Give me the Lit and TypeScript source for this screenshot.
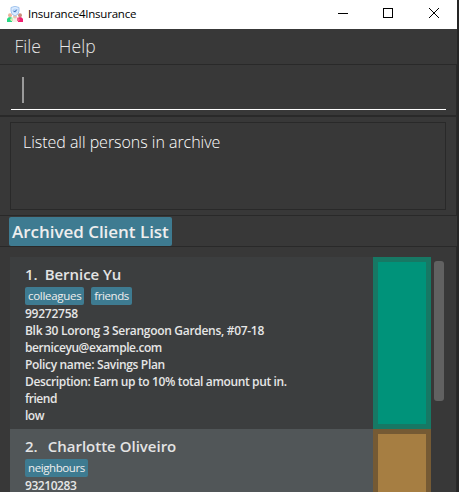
import { LitElement, html, css, svg } from "lit";
import { customElement, property } from "lit/decorators.js";
import { styleMap } from "lit/directives/style-map.js";

interface Line {
  text: string;
  gap: number;
}

interface Client {
  index: number;
  name: string;
  nameGap: number;
  tags: Line[];
  lines: Line[];
  tone: string;
  selected: boolean;
}

const clients: Client[] = [
  {
    index: 1,
    name: "Bernice Yu",
    nameGap: -0.05,
    tags: [
      { text: "colleagues", gap: -0.3 },
      { text: "friends", gap: -0.42 },
    ],
    lines: [
      { text: "99272758", gap: -0.25 },
      { text: "Blk 30 Lorong 3 Serangoon Gardens, #07-18", gap: -0.3 },
      { text: "berniceyu@example.com", gap: -0.43 },
      { text: "Policy name: Savings Plan", gap: -0.33 },
      { text: "Description: Earn up to 10% total amount put in.", gap: -0.37 },
      { text: "friend", gap: -0.5 },
      { text: "low", gap: -0.5 },
    ],
    tone: "green",
    selected: false,
  },
  {
    index: 2,
    name: "Charlotte Oliveiro",
    nameGap: 0,
    tags: [{ text: "neighbours", gap: -0.4 }],
    lines: [{ text: "93210283", gap: -0.45 }],
    tone: "amber",
    selected: true,
  },
];

@customElement("client-card")
export class ClientCard extends LitElement {
  @property({ attribute: false }) client!: Client;

  static styles = css`
    :host {
      display: block;
      flex: none;
    }
    .card {
      display: flex;
      height: 172px;
      background: #3c3e3f;
    }
    .card.selected {
      background: #515658;
    }
    .info {
      flex: 1;
      padding: 8px 0 0 15px;
      box-sizing: border-box;
      color: #eee;
      white-space: nowrap;
      overflow: hidden;
    }
    .name {
      display: flex;
      gap: 7px;
      height: 22px;
      line-height: 18px;
      font-size: 15px;
      font-weight: 600;
      color: #e4e4e4;
    }
    .selected .name {
      gap: 10px;
    }
    .tags {
      display: flex;
      gap: 7px;
      height: 18px;
    }
    .tag {
      background: #3e7b91;
      border-radius: 2px;
      padding: 0 3px;
      font-size: 11.5px;
      line-height: 18px;
    }
    .line {
      height: 17px;
      line-height: 17px;
      font-size: 12px;
      font-weight: 600;
      color: #e6e6e6;
    }
    .swatch {
      width: 58px;
      box-sizing: border-box;
      border: 5px solid #177864;
      background: #00937a;
    }
    .swatch.amber {
      border-color: #755a34;
      background: #a67e42;
    }
  `;

  render() {
    const c = this.client;
    const gap = (v: number) => styleMap({ letterSpacing: `${v}px` });
    return html`
      <div class="card ${c.selected ? "selected" : ""}">
        <div class="info">
          <div class="name"><span>${c.index}.</span><span style=${gap(c.nameGap)}>${c.name}</span></div>
          <div class="tags">
            ${c.tags.map((t) => html`<span class="tag" style=${gap(t.gap)}>${t.text}</span>`)}
          </div>
          ${c.lines.map((l) => html`<div class="line"><span style=${gap(l.gap)}>${l.text}</span></div>`)}
        </div>
        <div class="swatch ${c.tone}"></div>
      </div>
    `;
  }
}

const logo = svg`
  <path d="M0 16V13Q1 11 3 11L6 12V16Z" fill="#27d884"/>
  <path d="M16 16V13Q15 11 13 11L10 12V16Z" fill="#ef1f70"/>
  <path d="M5 16V12L8 10L11 12V16Z" fill="#f6ede8"/>
  <path d="M3 13L6 11.500V15H4Z" fill="#d5edb5"/>
  <path d="M13 13L10 11.500V15H12Z" fill="#f2648d"/>
  <circle cx="3" cy="9.200" r="2" fill="#e9b59e"/>
  <circle cx="13" cy="9.200" r="2" fill="#c98e7c"/>
  <circle cx="8" cy="10.500" r="2" fill="#edc3ae"/>
  <path d="M8 .3L12 1.500V5Q12 8.500 8 10Q4 8.500 4 5V1.500Z" fill="#dcecff" stroke="#8fb8e8" stroke-width=".8"/>
  <circle cx="8" cy="4.800" r="2.400" fill="#bdd9fa"/>
  <path d="M6.500 4.800L7.700 6L9.800 3.600" fill="none" stroke="#2a5fae" stroke-width="1"/>
`;

@customElement("app-root")
export class AppRoot extends LitElement {
  static styles = css`
    :host {
      display: block;
      width: 459px;
      height: 492px;
      overflow: hidden;
      background: #262626;
      font-family: "Open Sans", "Noto Sans", sans-serif;
    }
    .window {
      display: flex;
      flex-direction: column;
      width: 457px;
      height: 492px;
      background: #383838;
      white-space: nowrap;
    }
    .titlebar {
      display: flex;
      align-items: center;
      flex: none;
      height: 29px;
      background: #fff;
      color: #000;
    }
    .logo {
      width: 16px;
      height: 16px;
      margin: -2px 5px 0 7px;
    }
    .title {
      font-size: 11.5px;
      line-height: 27px;
      height: 29px;
      letter-spacing: -0.22px;
      flex: 1;
    }
    .controls {
      width: 101px;
      height: 10px;
      margin: -3px 18px 0 0;
    }
    .menu {
      display: flex;
      flex: none;
      gap: 18px;
      height: 35px;
      padding-left: 14.5px;
      font-size: 17.5px;
      font-weight: 300;
      line-height: 34px;
      color: #e6e6e6;
    }
    .menu .help {
      letter-spacing: 0.1px;
    }
    .pane {
      flex: none;
      box-sizing: border-box;
      border-top: 1px solid #292929;
      border-right: 1px solid #292929;
    }
    .command {
      height: 51px;
      padding: 12px 10px 0 11px;
    }
    .field {
      height: 33px;
      box-sizing: border-box;
      border-bottom: 1px solid #fff;
      padding-left: 11px;
    }
    .caret {
      width: 2px;
      height: 26px;
      background: #9a9a9a;
    }
    .result {
      height: 100px;
      border-top-width: 2px;
      padding: 5px 10px 0;
    }
    .message {
      box-sizing: border-box;
      height: 88px;
      border: 1px solid #292929;
      padding: 8px 0 0 12px;
      font-size: 16px;
      font-weight: 300;
      line-height: 23px;
      letter-spacing: -0.03px;
      color: #fff;
    }
    .heading {
      height: 31px;
      padding: 1px 0 0 9px;
      border-right: 0;
    }
    .label {
      display: inline-block;
      width: 163px;
      height: 29px;
      box-sizing: border-box;
      padding-left: 3px;
      border-radius: 2px;
      background: #3e7b91;
      color: #eee;
      font-size: 17px;
      font-weight: 600;
      line-height: 29px;
      letter-spacing: -0.03px;
    }
    .list {
      display: flex;
      flex: 1;
      min-height: 0;
      padding: 10px 0 0 10px;
      overflow: hidden;
    }
    .cards {
      display: flex;
      flex-direction: column;
      width: 421px;
    }
    .thumb {
      width: 10px;
      height: 140px;
      margin: 4px 0 0 3px;
      border-radius: 3px;
      background: #616161;
    }
  `;

  render() {
    return html`
      <div class="window">
        <div class="titlebar">
          <svg class="logo" viewBox="0 0 16 16">${logo}</svg>
          <span class="title">Insurance4Insurance</span>
          <svg class="controls" viewBox="0 0 101 10" fill="none" stroke="#000">
            <path d="M0 5.500H10M45.500 .500H54.500V9.500H45.500Z" shape-rendering="crispEdges" />
            <path d="M91 0L101 10M101 0L91 10" />
          </svg>
        </div>
        <div class="menu"><span class="file">File</span><span class="help">Help</span></div>
        <div class="pane command"><div class="field"><div class="caret"></div></div></div>
        <div class="pane result"><div class="message">Listed all persons in archive</div></div>
        <div class="pane heading"><span class="label">Archived Client List</span></div>
        <div class="pane list">
          <div class="cards">${clients.map((c) => html`<client-card .client=${c}></client-card>`)}</div>
          <div class="thumb"></div>
        </div>
      </div>
    `;
  }
}
